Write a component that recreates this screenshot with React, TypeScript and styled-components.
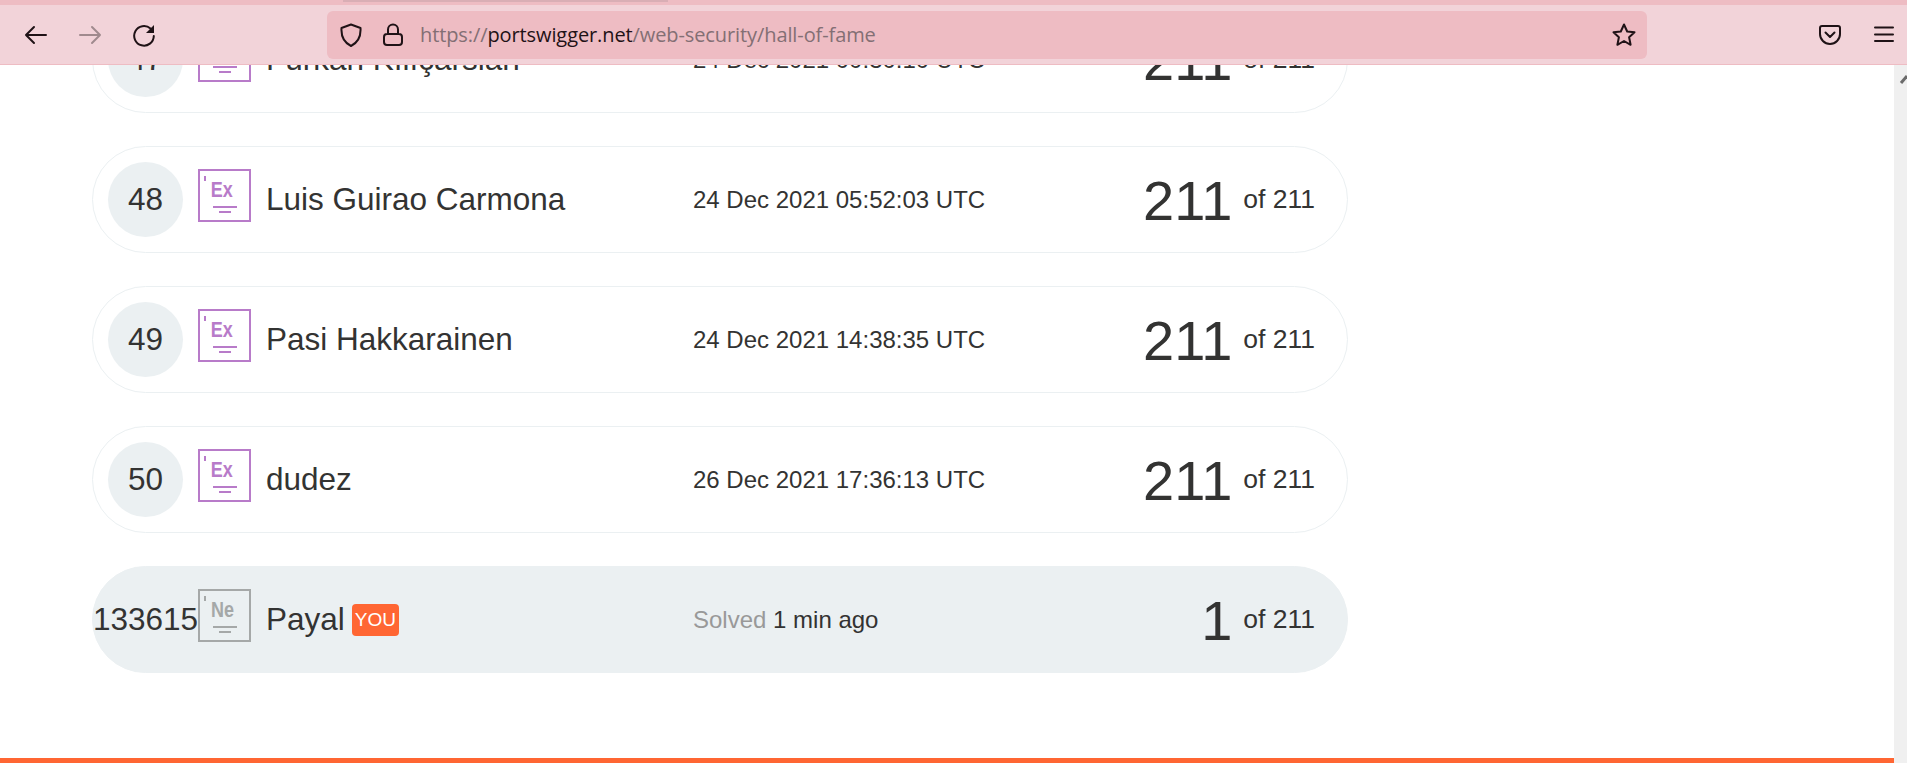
import type { ReactNode } from "react";
import styled, { createGlobalStyle } from "styled-components";

const GlobalStyle = createGlobalStyle`
  html, body {
    margin: 0;
    padding: 0;
    background: #ffffff;
    overflow: hidden;
  }
`;

const Page = styled.div`
  position: relative;
  display: flex;
  width: 100%;
  height: 100vh;
  overflow: hidden;
  font-family: "Liberation Sans", Arial, sans-serif;
  color: #333332;
`;

/* browser chrome, sits over the scrolled page */
const Chrome = styled.header`
  position: absolute;
  top: 0;
  left: 0;
  right: 0;
  z-index: 2;
`;

const TabStrip = styled.div`
  height: 5px;
  background: #eebcc3;
  padding-left: 343px;
`;

const ActiveTab = styled.div`
  width: 325px;
  height: 2px;
  background: #d9aeb5;
`;

const Toolbar = styled.div`
  display: flex;
  align-items: center;
  height: 60px;
  box-sizing: border-box;
  padding: 0 11px 0 24px;
  background: #f2d3d9;
  border-bottom: 1px solid #eebcc3;
`;

const NavGroup = styled.div`
  display: flex;
  gap: 30px;
  margin-right: 171px;
`;

const ActionGroup = styled.div`
  display: flex;
  gap: 30px;
  margin-left: auto;
`;

const IconSlot = styled.span<{ $faded?: boolean }>`
  display: flex;
  width: 24px;
  height: 24px;
  color: ${(p) => (p.$faded ? "#a08a8e" : "#1f1216")};
`;

const UrlBar = styled.div`
  display: flex;
  align-items: center;
  width: 1320px;
  height: 48px;
  box-sizing: border-box;
  padding: 0 11px 0 12px;
  background: #eebcc3;
  border-radius: 6px;
`;

const LockSlot = styled(IconSlot)`
  margin-left: 18px;
  margin-right: 15px;
`;

const StarSlot = styled(IconSlot)`
  margin-left: auto;
`;

const UrlText = styled.div`
  font-family: "Open Sans", "Noto Sans", sans-serif;
  font-size: 20px;
  letter-spacing: -0.1px;
  color: #836f74;
  white-space: nowrap;

  b {
    font-weight: 400;
    color: #1f1216;
  }
`;

const Main = styled.main`
  flex: 1;
  display: flex;
  flex-direction: column;
  min-width: 0;
`;

const Board = styled.div`
  display: flex;
  flex-direction: column;
  gap: 33px;
  width: 1256px;
  margin-left: 92px;
  padding-top: 6px;
`;

const Row = styled.div<{ $mine?: boolean }>`
  display: flex;
  align-items: center;
  height: 107px;
  box-sizing: border-box;
  padding: 0 32px 0 15px;
  border: 1px solid #ebf0f2;
  border-radius: 54px;
  background: ${(p) => (p.$mine ? "#ebf0f2" : "#ffffff")};
`;

const Rank = styled.div`
  flex: none;
  display: flex;
  align-items: center;
  justify-content: center;
  width: 75px;
  height: 75px;
  border-radius: 50%;
  background: #ebf0f2;
  font-size: 31.5px;
  white-space: nowrap;
`;

const Tile = styled.div<{ $tone: string }>`
  position: relative;
  flex: none;
  display: flex;
  flex-direction: column;
  align-items: center;
  width: 53px;
  height: 53px;
  box-sizing: border-box;
  margin: 0 15px 8px;
  border: 2px solid ${(p) => p.$tone};
  color: ${(p) => p.$tone};

  &::before {
    content: "";
    position: absolute;
    left: 4px;
    top: 5px;
    width: 2px;
    height: 5px;
    background: ${(p) => p.$tone};
  }
`;

const Symbol = styled.span`
  font-weight: 700;
  font-size: 22.5px;
  line-height: 22px;
  margin: 8px 5px 0 0;
  transform: scaleX(0.8);
`;

const Rule = styled.i<{ $short?: boolean }>`
  display: block;
  width: ${(p) => (p.$short ? 12 : 24)}px;
  height: 2px;
  margin-top: ${(p) => (p.$short ? 3 : 5)}px;
  background: currentColor;
`;

const Name = styled.div`
  flex: none;
  display: flex;
  align-items: center;
  gap: 7px;
  width: 427px;
  font-size: 31.5px;
  white-space: nowrap;
`;

const YouBadge = styled.span`
  display: flex;
  align-items: center;
  justify-content: center;
  width: 47px;
  height: 32px;
  border-radius: 4px;
  background: #ff6633;
  color: #ffffff;
  font-size: 19px;
`;

const When = styled.div`
  font-size: 24px;
  white-space: nowrap;

  span {
    color: #999999;
  }
`;

const Score = styled.div`
  display: flex;
  align-items: center;
  gap: 11px;
  margin-left: auto;
  font-size: 26.5px;

  strong {
    font-weight: 400;
    font-size: 56px;
    line-height: 1;
    margin-top: 2px;
  }
`;

const Footer = styled.footer`
  height: 5px;
  margin-top: auto;
  background: #ff6633;
`;

const Scrollbar = styled.div`
  flex: none;
  width: 13px;
  padding-top: 73px;
  background: #f0f0f0;

  svg {
    display: block;
  }
`;

const Line = ({ d, children }: { d: string; children?: ReactNode }) => (
  <svg
    width="24"
    height="24"
    viewBox="0 0 24 24"
    fill="none"
    stroke="currentColor"
    strokeWidth="2"
    strokeLinecap="round"
    strokeLinejoin="round"
  >
    <path d={d} />
    {children}
  </svg>
);

const icons = {
  back: "M2 12h20M10 4l-8 8 8 8",
  forward: "M2 12h20M14 4l8 8-8 8",
  reload: "M18.500 5.500A9.800 9.800 0 1 0 21.800 13",
  shield: "M12 1.500 21.500 5c.6 9-2.600 14.500-9.500 18C5.100 19.500 1.900 14 2.500 5L12 1.500Z",
  lock: "M7 11V6.500a5 5 0 0 1 10 0V11M6 11h12a3 3 0 0 1 3 3v5a3 3 0 0 1-3 3H6a3 3 0 0 1-3-3v-5a3 3 0 0 1 3-3Z",
  star: "M12 1.500l3.200 7 7.300.8-5.400 5 1.500 7.500-6.600-3.800-6.600 3.800 1.500-7.500-5.400-5 7.300-.8 3.200-7Z",
  pocket: "M4 3h16a2 2 0 0 1 2 2v6a10 10 0 0 1-20 0V5a2 2 0 0 1 2-2ZM7.500 9.500 12 14l4.500-4.500",
  menu: "M3 4.500h18M3 11.500h18M3 18h18",
};

type Entry = {
  rank: number;
  name: string;
  time: string;
};

const entries: Entry[] = [
  { rank: 47, name: "Furkan Kılıçarslan", time: "24 Dec 2021 00:30:10 UTC" },
  { rank: 48, name: "Luis Guirao Carmona", time: "24 Dec 2021 05:52:03 UTC" },
  { rank: 49, name: "Pasi Hakkarainen", time: "24 Dec 2021 14:38:35 UTC" },
  { rank: 50, name: "dudez", time: "26 Dec 2021 17:36:13 UTC" },
];

const ElementTile = ({ symbol, tone }: { symbol: string; tone: string }) => (
  <Tile $tone={tone}>
    <Symbol>{symbol}</Symbol>
    <Rule />
    <Rule $short />
  </Tile>
);

export default function App() {
  return (
    <Page>
      <GlobalStyle />
      <Chrome>
        <TabStrip>
          <ActiveTab />
        </TabStrip>
        <Toolbar>
          <NavGroup>
            <IconSlot><Line d={icons.back} /></IconSlot>
            <IconSlot $faded><Line d={icons.forward} /></IconSlot>
            <IconSlot>
              <Line d={icons.reload}>
                <path d="M22 2v8h-8Z" fill="currentColor" stroke="none" />
              </Line>
            </IconSlot>
          </NavGroup>
          <UrlBar>
            <IconSlot><Line d={icons.shield} /></IconSlot>
            <LockSlot><Line d={icons.lock} /></LockSlot>
            <UrlText>
              https://<b>portswigger.net</b>/web-security/hall-of-fame
            </UrlText>
            <StarSlot><Line d={icons.star} /></StarSlot>
          </UrlBar>
          <ActionGroup>
            <IconSlot><Line d={icons.pocket} /></IconSlot>
            <IconSlot><Line d={icons.menu} /></IconSlot>
          </ActionGroup>
        </Toolbar>
      </Chrome>

      <Main>
        <Board>
          {entries.map((e) => (
            <Row key={e.rank}>
              <Rank>{e.rank}</Rank>
              <ElementTile symbol="Ex" tone="#b87bc9" />
              <Name>{e.name}</Name>
              <When>{e.time}</When>
              <Score>
                <strong>211</strong> of 211
              </Score>
            </Row>
          ))}
          <Row $mine>
            <Rank>133615</Rank>
            <ElementTile symbol="Ne" tone="#a5a8a8" />
            <Name>
              Payal <YouBadge>YOU</YouBadge>
            </Name>
            <When>
              <span>Solved</span> 1 min ago
            </When>
            <Score>
              <strong>1</strong> of 211
            </Score>
          </Row>
        </Board>
        <Footer />
      </Main>

      <Scrollbar>
        <svg width="13" height="12" viewBox="0 0 13 12">
          <path d="M7 10 L13 3" stroke="#6b6b6b" strokeWidth="3" fill="none" />
        </svg>
      </Scrollbar>
    </Page>
  );
}
